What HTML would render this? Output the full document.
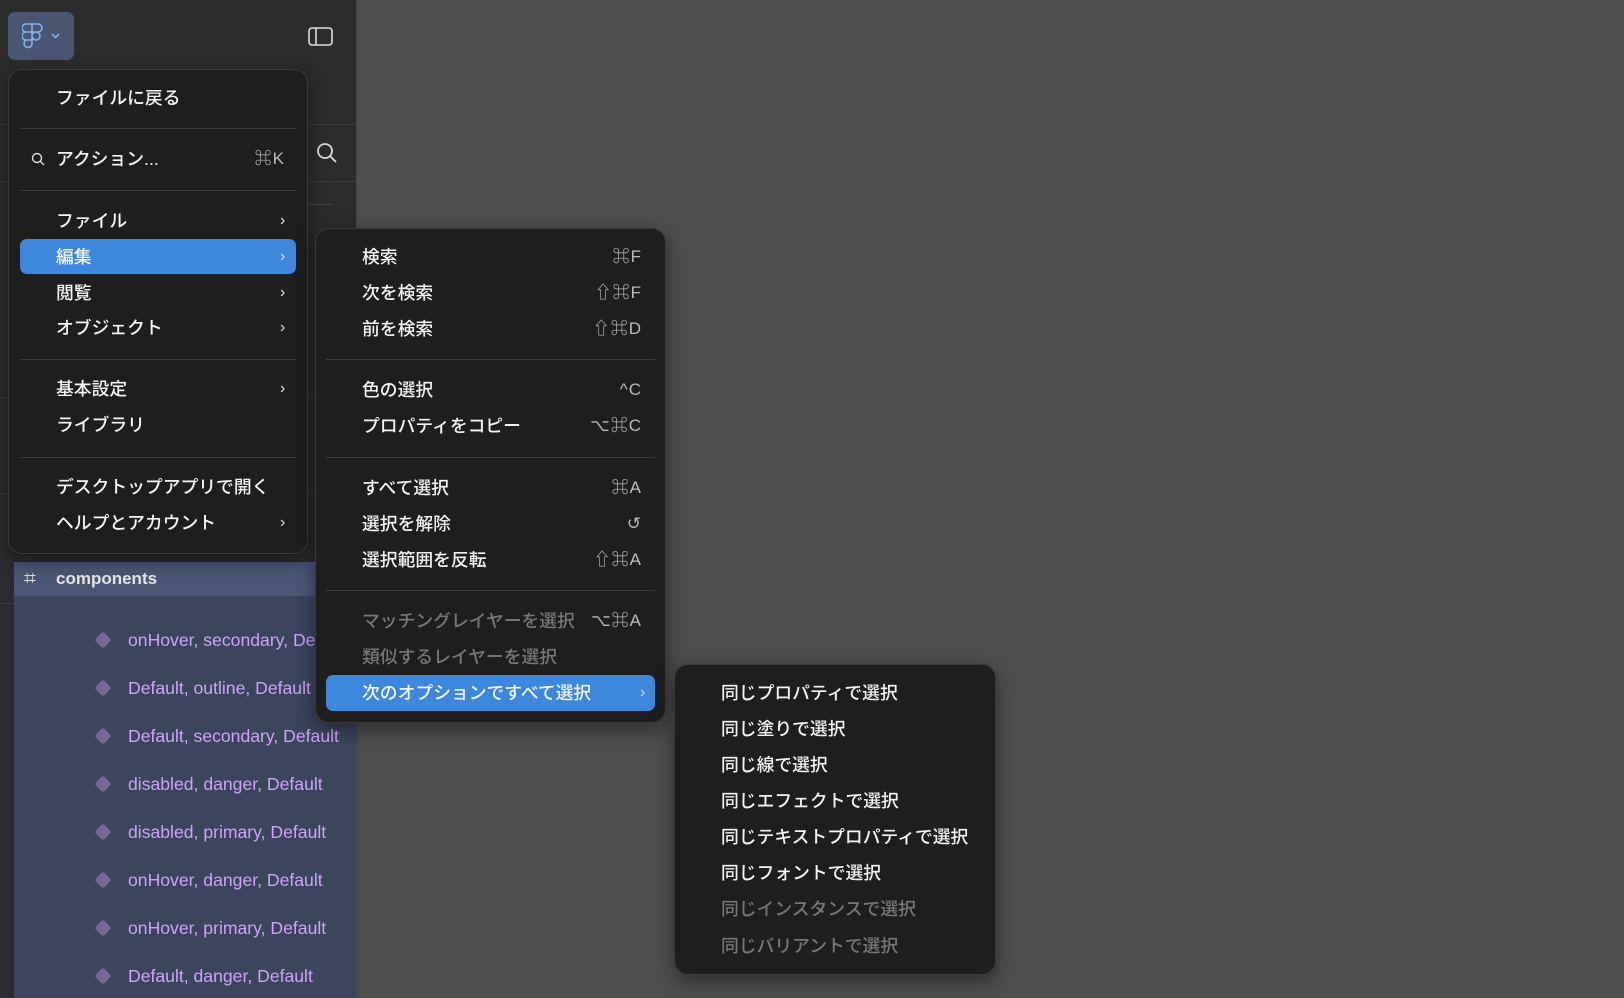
<!DOCTYPE html>
<html><head><meta charset="utf-8"><style>
*{margin:0;padding:0;box-sizing:border-box}
body{width:1624px;height:998px;background:#4e4e4e;position:relative;overflow:hidden;font-family:"Liberation Sans","Noto Sans CJK JP",sans-serif;}
.side{position:absolute;left:0;top:0;width:357px;height:998px;background:#2c2c2c;border-right:1px solid #444;}
.hl{position:absolute;height:1px;background:#3c3c3c}
.menu{position:absolute;background:#1e1e1e;border:1px solid #3a3a3a;border-radius:14px;box-shadow:0 6px 20px rgba(0,0,0,.45)}
.it{position:absolute;height:36px;line-height:36px;font-size:17.8px;color:#f4f4f4;white-space:nowrap;font-weight:500}
.dis{color:#777}
.sc{position:absolute;height:36px;line-height:36px;font-size:17px;color:#bbb;text-align:right;white-space:nowrap;letter-spacing:1px}
.ch{position:absolute;font-size:16px;color:#ddd;height:36px;line-height:36px}
.sep{position:absolute;height:1px;background:#3a3a3a}
.sel{position:absolute;background:#3d87dd;border-radius:7px}
.rows{position:absolute;left:14px;top:596px;width:343px;height:402px;background:#3c445e;overflow:hidden}
.row{position:absolute;left:114px;font-size:17.6px;color:#cba6f5;height:22px;line-height:22px;white-space:nowrap}
.dm{position:absolute;left:83px;width:12px;height:12px;background:#7b6997;transform:rotate(45deg);border-radius:2px}
</style></head><body>
<div class="side">
  <div class="hl" style="left:0;top:124px;width:357px"></div>
  <div class="hl" style="left:0;top:181px;width:357px"></div>
  <div class="hl" style="left:305px;top:204px;width:27px;background:#444"></div>
  <div class="hl" style="left:326px;top:300px;width:31px"></div>
  <div class="hl" style="left:326px;top:359px;width:31px"></div>
  <div class="hl" style="left:0;top:397px;width:357px"></div>
  <div class="hl" style="left:326px;top:456px;width:31px"></div>
  <div class="hl" style="left:0;top:493px;width:357px"></div>
  <div class="hl" style="left:0;top:603px;width:357px"></div>
</div>
<div style="position:absolute;left:8px;top:12px;width:66px;height:48px;background:#4b5673;border-radius:7px"></div>
<svg style="position:absolute;left:22px;top:22px" width="22" height="28" viewBox="0 0 22 28" fill="none" stroke="#7fb2f0" stroke-width="1.6"><path d="M4 2h6v8H4a4 4 0 0 1 0-8zM10 2h6a4 4 0 0 1 0 8h-6zM4 10h6v8H4a4 4 0 0 1 0-8zM10 18H4a4 4 0 1 0 6 4zM14 10a4 4 0 1 1 0 8 4 4 0 0 1 0-8z"/></svg>
<svg style="position:absolute;left:51px;top:33px" width="9" height="6" viewBox="0 0 9 6" fill="none" stroke="#8fb8ee" stroke-width="1.4"><path d="M1 1l3.5 3.5L8 1"/></svg>
<svg style="position:absolute;left:308px;top:27px" width="25" height="19" viewBox="0 0 25 19" fill="none" stroke="#ddd" stroke-width="1.6"><rect x="1" y="1" width="23" height="17" rx="3"/><path d="M8 1v17"/></svg>
<svg style="position:absolute;left:316px;top:142px" width="22" height="22" viewBox="0 0 22 22" fill="none" stroke="#ddd" stroke-width="1.8"><circle cx="9" cy="9" r="7"/><path d="M14 14l6 6"/></svg>

<div style="position:absolute;left:14px;top:562px;width:343px;height:34px;background:#4b5775"></div>
<div style="position:absolute;left:24px;top:567px;font-size:21px;color:#ddd">⌗</div>
<div style="position:absolute;left:56px;top:569px;font-size:17px;font-weight:bold;color:#e6e6e6">components</div>
<div class="rows">
<div class="dm" style="top:38px"></div><div class="row" style="top:33px">onHover, secondary, Default</div>
<div class="dm" style="top:86px"></div><div class="row" style="top:81px">Default, outline, Default</div>
<div class="dm" style="top:134px"></div><div class="row" style="top:129px">Default, secondary, Default</div>
<div class="dm" style="top:182px"></div><div class="row" style="top:177px">disabled, danger, Default</div>
<div class="dm" style="top:230px"></div><div class="row" style="top:225px">disabled, primary, Default</div>
<div class="dm" style="top:278px"></div><div class="row" style="top:273px">onHover, danger, Default</div>
<div class="dm" style="top:326px"></div><div class="row" style="top:321px">onHover, primary, Default</div>
<div class="dm" style="top:374px"></div><div class="row" style="top:369px">Default, danger, Default</div>
</div>

<!-- Menu 1 -->
<div class="menu" style="left:8px;top:69px;width:300px;height:485px"></div>
<div class="it" style="left:56px;top:80px">ファイルに戻る</div>
<div class="sep" style="left:20px;top:128px;width:276px"></div>
<svg style="position:absolute;left:31px;top:152px" width="14" height="14" viewBox="0 0 14 14" fill="none" stroke="#ddd" stroke-width="1.4"><circle cx="6" cy="6" r="4.5"/><path d="M9.3 9.3L13 13"/></svg>
<div class="it" style="left:56px;top:141px">アクション...</div>
<div class="sc" style="left:200px;width:85px;top:141px">⌘K</div>
<div class="sep" style="left:20px;top:190px;width:276px"></div>
<div class="it" style="left:56px;top:203px">ファイル</div><div class="ch" style="left:280px;top:203px">›</div>
<div class="sel" style="left:20px;top:239px;width:276px;height:35px"></div>
<div class="it" style="left:56px;top:239px">編集</div><div class="ch" style="left:280px;top:239px">›</div>
<div class="it" style="left:56px;top:275px">閲覧</div><div class="ch" style="left:280px;top:275px">›</div>
<div class="it" style="left:56px;top:310px">オブジェクト</div><div class="ch" style="left:280px;top:310px">›</div>
<div class="sep" style="left:20px;top:359px;width:276px"></div>
<div class="it" style="left:56px;top:371px">基本設定</div><div class="ch" style="left:280px;top:371px">›</div>
<div class="it" style="left:56px;top:407px">ライブラリ</div>
<div class="sep" style="left:20px;top:457px;width:276px"></div>
<div class="it" style="left:56px;top:469px">デスクトップアプリで開く</div>
<div class="it" style="left:56px;top:505px">ヘルプとアカウント</div><div class="ch" style="left:280px;top:505px">›</div>

<!-- Menu 2 -->
<div class="menu" style="left:315px;top:228px;width:351px;height:495px"></div>
<div class="it" style="left:362px;top:239px">検索</div><div class="sc" style="left:540px;width:102px;top:239px">⌘F</div>
<div class="it" style="left:362px;top:275px">次を検索</div><div class="sc" style="left:540px;width:102px;top:275px">⇧⌘F</div>
<div class="it" style="left:362px;top:311px">前を検索</div><div class="sc" style="left:540px;width:102px;top:311px">⇧⌘D</div>
<div class="sep" style="left:326px;top:359px;width:329px"></div>
<div class="it" style="left:362px;top:372px">色の選択</div><div class="sc" style="left:540px;width:102px;top:372px">^C</div>
<div class="it" style="left:362px;top:408px">プロパティをコピー</div><div class="sc" style="left:540px;width:102px;top:408px">⌥⌘C</div>
<div class="sep" style="left:326px;top:457px;width:329px"></div>
<div class="it" style="left:362px;top:470px">すべて選択</div><div class="sc" style="left:540px;width:102px;top:470px">⌘A</div>
<div class="it" style="left:362px;top:506px">選択を解除</div><div class="sc" style="left:540px;width:102px;top:506px">↺</div>
<div class="it" style="left:362px;top:542px">選択範囲を反転</div><div class="sc" style="left:540px;width:102px;top:542px">⇧⌘A</div>
<div class="sep" style="left:326px;top:590px;width:329px"></div>
<div class="it dis" style="left:362px;top:603px">マッチングレイヤーを選択</div><div class="sc dis" style="left:560px;width:82px;top:603px">⌥⌘A</div>
<div class="it dis" style="left:362px;top:639px">類似するレイヤーを選択</div>
<div class="sel" style="left:326px;top:675px;width:329px;height:36px"></div>
<div class="it" style="left:362px;top:675px">次のオプションですべて選択</div><div class="ch" style="left:640px;top:675px">›</div>

<!-- Menu 3 -->
<div class="menu" style="left:674px;top:664px;width:322px;height:311px"></div>
<div class="it" style="left:721px;top:675px">同じプロパティで選択</div>
<div class="it" style="left:721px;top:711px">同じ塗りで選択</div>
<div class="it" style="left:721px;top:747px">同じ線で選択</div>
<div class="it" style="left:721px;top:783px">同じエフェクトで選択</div>
<div class="it" style="left:721px;top:819px">同じテキストプロパティで選択</div>
<div class="it" style="left:721px;top:855px">同じフォントで選択</div>
<div class="it dis" style="left:721px;top:891px">同じインスタンスで選択</div>
<div class="it dis" style="left:721px;top:928px">同じバリアントで選択</div>
</body></html>
